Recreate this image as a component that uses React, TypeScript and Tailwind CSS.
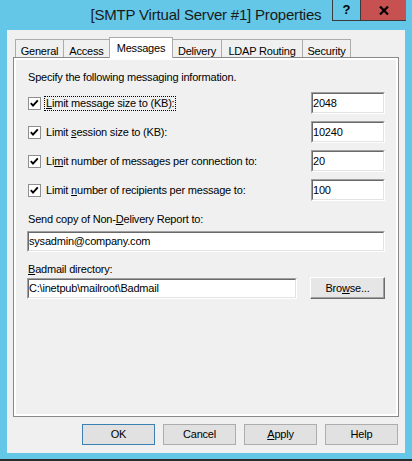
import React from "react";

const font = "font-['Liberation_Sans',Arial,sans-serif]";

function Field({ value, className }: { value: string; className: string }) {
  return (
    <div
      className={`border border-t-[#a0a0a0] border-l-[#a0a0a0] border-r-white border-b-white ${className}`}
    >
      <div className="h-full border border-t-[#696969] border-l-[#696969] border-r-[#e3e3e3] border-b-[#e3e3e3] bg-white flex items-center pl-[0px] text-[11px] tracking-[-0.2px] text-black">
        {value}
      </div>
    </div>
  );
}

function Check() {
  return (
    <div className="w-[13px] h-[13px] shrink-0 border border-[#8e8f8f] bg-white flex items-center justify-center">
      <svg width="11" height="11" viewBox="0 0 11 11">
        <polyline points="1.8,5.2 4,7.6 8.8,2.4" fill="none" stroke="#000" strokeWidth="1.9" />
      </svg>
    </div>
  );
}

function CheckRow({ label, value, focused }: { label: React.ReactNode; value: string; focused?: boolean }) {
  return (
    <div className="flex items-center h-[22px]">
      <Check />
      <span
        className={`ml-[4px] px-[1px] leading-[13px] ${focused ? "outline-1 outline-dotted outline-black" : ""}`}
      >
        {label}
      </span>
      <Field value={value} className="ml-auto w-[74px] h-[22px]" />
    </div>
  );
}

const tabs = [
  { name: "General", w: "w-[49px]" },
  { name: "Access", w: "w-[47px]" },
  { name: "Messages", w: "w-[64px]", active: true },
  { name: "Delivery", w: "w-[50px]" },
  { name: "LDAP Routing", w: "w-[82px]" },
  { name: "Security", w: "w-[49px]" },
];

function Btn({ children, primary }: { children: React.ReactNode; primary?: boolean }) {
  return (
    <button
      className={`w-[73px] h-[21px] bg-[#e1e1e1] border text-[11px] text-black flex items-center justify-center ${
        primary ? "border-[#3c7fb1]" : "border-[#adadad]"
      }`}
    >
      {children}
    </button>
  );
}

export default function App() {
  return (
    <div className={`w-[412px] h-[461px] bg-[#64c7e8] relative overflow-hidden flex flex-col ${font}`}>
      <div className="h-[30px] flex items-center justify-center text-[15px] tracking-[-0.2px] text-[#1a1a1a]">
        [SMTP Virtual Server #1] Properties
      </div>
      <div className="absolute top-0 left-[332px] flex border-l border-b border-[#3b3b3b]">
        <div className="w-[28px] h-[20px] border-r border-[#3b3b3b] flex items-center justify-center text-[13px] font-bold text-black">
          ?
        </div>
        <div className="w-[45px] h-[20px] bg-[#c75050] flex items-center justify-center">
          <svg width="10" height="9" viewBox="0 0 10 9">
            <path d="M1 0.5 L9 8.5 M9 0.5 L1 8.5" stroke="#000" strokeWidth="2.2" />
          </svg>
        </div>
      </div>

      <div className="mx-[7px] h-[423px] bg-[#f0f0f0] px-[6px] flex flex-col text-[11px] tracking-[-0.2px] text-black">
        <div className="h-[27px] flex items-end pl-[2px]">
          {tabs.map((t) =>
            t.active ? (
              <div
                key={t.name}
                className={`${t.w} h-[21px] -mb-px -mr-px relative z-10 bg-white border-t border-l border-r border-[#acacac] flex justify-center pt-[2px]`}
              >
                {t.name}
              </div>
            ) : (
              <div
                key={t.name}
                className={`${t.w} h-[18px] -mr-px bg-[#f0f0f0] border-t border-l border-r border-[#acacac] flex justify-center pt-[3px]`}
              >
                {t.name}
              </div>
            )
          )}
        </div>

        <div className="h-[360px] border border-[#898989] bg-white p-[2px]">
          <div className="h-full bg-[#f0f0f0] pl-[12px] pr-[11px] pt-[11px] flex flex-col">
            <div className="leading-[13px]">Specify the following messaging information.</div>
            <div className="mt-[8px] flex flex-col gap-[7px]">
              <CheckRow
                focused
                value="2048"
                label={
                  <>
                    <u>L</u>imit message size to (KB):
                  </>
                }
              />
              <CheckRow
                value="10240"
                label={
                  <>
                    Limit <u>s</u>ession size to (KB):
                  </>
                }
              />
              <CheckRow
                value="20"
                label={
                  <>
                    Li<u>m</u>it number of messages per connection to:
                  </>
                }
              />
              <CheckRow
                value="100"
                label={
                  <>
                    Limit <u>n</u>umber of recipients per message to:
                  </>
                }
              />
            </div>
            <div className="mt-[12px] leading-[13px]">
              Send copy of Non-<u>D</u>elivery Report to:
            </div>
            <Field value="sysadmin@company.com" className="mt-[5px] -ml-px h-[21px]" />
            <div className="mt-[11px] leading-[13px]">
              <u>B</u>admail directory:
            </div>
            <div className="mt-[1px] h-[22px] flex items-center">
              <Field value="C:\inetpub\mailroot\Badmail" className="-ml-px w-[270px] h-[21px]" />
              <button className="ml-auto w-[75px] h-[22px] bg-[#e6e6e6] border border-t-white border-l-white border-r-[#6d6d6d] border-b-[#6d6d6d] shadow-[inset_-1px_-1px_0_#a0a0a0] text-[11px] tracking-[-0.2px] flex items-center justify-center">
                Bro<u>w</u>se...
              </button>
            </div>
          </div>
        </div>

        <div className="mt-[7px] flex justify-end gap-[8px] pr-[1px]">
          <Btn primary>OK</Btn>
          <Btn>Cancel</Btn>
          <Btn>
            <u>A</u>pply
          </Btn>
          <Btn>Help</Btn>
        </div>
      </div>
      <div className="h-[6px]" />
      <div className="h-[2px] bg-[#2b2b2b]" />
    </div>
  );
}
